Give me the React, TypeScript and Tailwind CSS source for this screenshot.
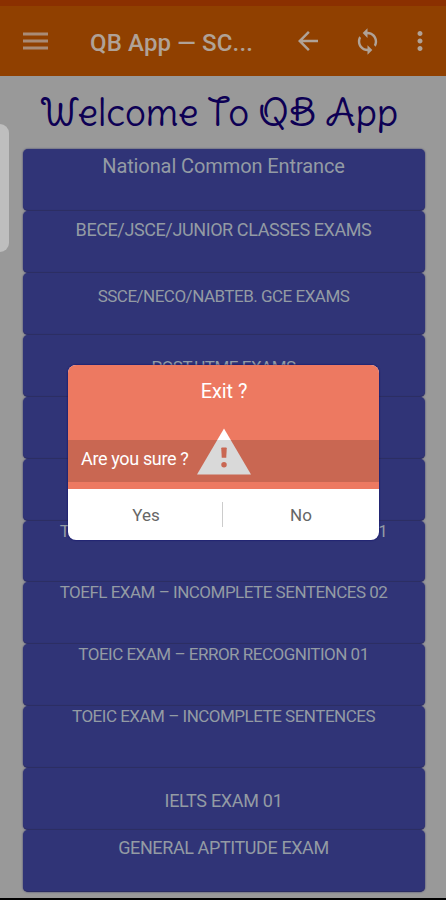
interface Exam {
  name: string;
  className: string;
}

// rows 5 and 6 have no caption
const exams: Exam[] = [
  { name: "National Common Entrance", className: "pt-[7px] text-[20px] tracking-[-0.1px]" },
  { name: "BECE/JSCE/JUNIOR CLASSES EXAMS", className: "pt-[9px] text-[18px] tracking-[-0.4px]" },
  { name: "SSCE/NECO/NABTEB. GCE EXAMS", className: "pt-[13px] text-[17px] tracking-[-0.5px]" },
  { name: "POST-UTME EXAMS", className: "pt-[22px] text-[17px] tracking-[-0.5px]" },
  { name: "", className: "pt-0" },
  { name: "", className: "pt-0" },
  { name: "TOEFL EXAM – INCOMPLETE SENTENCES 01", className: "pt-0 text-[17px] tracking-[-0.5px]" },
  { name: "TOEFL EXAM – INCOMPLETE SENTENCES 02", className: "pt-0 text-[17px] tracking-[-0.5px]" },
  { name: "TOEIC EXAM – ERROR RECOGNITION 01", className: "pt-0 text-[17px] tracking-[-0.5px]" },
  { name: "TOEIC EXAM – INCOMPLETE SENTENCES", className: "pt-0 text-[17px] tracking-[-0.5px]" },
  { name: "IELTS EXAM 01", className: "pt-[23px] text-[18px] tracking-[-0.3px]" },
  { name: "GENERAL APTITUDE EXAM", className: "pt-[8px] text-[18px] tracking-[-0.4px]" },
];

function Toolbar() {
  return (
    <header className="flex h-[70px] items-center bg-[#904000] text-[#b0a297]">
      <svg className="ml-[23px] h-[18px] w-[25px] text-[#a98b76]" viewBox="0 0 25 18" fill="currentColor">
        <path d="M0 0.500h25v3H0zM0 7.500h25v3H0zM0 14.500h25v3H0z" />
      </svg>
      <h1 className="mt-[3px] ml-[42px] w-[166px] text-[24px] font-medium tracking-[0.15px] whitespace-nowrap">QB App — SC...</h1>
      <svg className="ml-[37px] h-[30px] w-[30px]" viewBox="0 0 24 24" fill="currentColor">
        <path d="M20 11H7.83l5.59-5.59L12 4l-8 8 8 8 1.41-1.41L7.83 13H20v-2z" />
      </svg>
      <svg className="ml-[30px] h-[29px] w-[29px]" viewBox="0 0 24 24" fill="currentColor">
        <path d="M12 4V1L8 5l4 4V6c3.31 0 6 2.69 6 6 0 1.01-.25 1.97-.7 2.8l1.46 1.46C19.54 15.03 20 13.57 20 12c0-4.42-3.58-8-8-8zm0 14c-3.31 0-6-2.69-6-6 0-1.01.25-1.97.7-2.8L5.24 7.74C4.46 8.97 4 10.43 4 12c0 4.42 3.58 8 8 8v3l4-4-4-4v3z" />
      </svg>
      <svg className="ml-[23px] h-[30px] w-[30px]" viewBox="0 0 24 24" fill="currentColor">
        <path d="M12 8c1.1 0 2-.9 2-2s-.9-2-2-2-2 .9-2 2 .9 2 2 2zm0 2c-1.1 0-2 .9-2 2s.9 2 2 2 2-.9 2-2-.9-2-2-2zm0 6c-1.1 0-2 .9-2 2s.9 2 2 2 2-.9 2-2-.9-2-2-2z" />
      </svg>
    </header>
  );
}

function ExitDialog() {
  return (
    <div className="absolute top-[365px] left-[68px] h-[175px] w-[311px] overflow-hidden rounded-lg bg-white shadow-[0_0_2px_#00006a]">
      <div className="relative h-[124px] bg-[#ed7961] text-white">
        <h3 className="pt-[14px] pl-px text-center text-[20px] leading-6 tracking-[-0.1px]">Exit ?</h3>
        <svg className="absolute top-[63px] left-[129px] h-[47px] w-[54px]" viewBox="0 0 55 47">
          <path fill="#fff" d="M27.500 0L55 47H0z" />
          <path fill="#ed7961" d="M25.500 19.500h4a.8.8 0 0 1 .8.8l-.5 9.500h-4.600l-.5-9.500a.8.8 0 0 1 .8-.8z" />
          <circle cx="27.500" cy="37" r="2.800" fill="#ed7961" />
        </svg>
        <p className="absolute top-[75px] left-0 h-[42px] w-full bg-[#000]/15 pl-[13px] text-[18px] leading-[38px] tracking-[-0.35px]">Are you sure ?</p>
      </div>
      <div className="flex h-[51px] items-center text-[17px] text-[#666]">
        <button className="w-[154px] pt-[2px] pl-[2px]">Yes</button>
        <div className="h-[25px] w-px bg-[#ccc]" />
        <button className="w-[156px] pt-[2px]">No</button>
      </div>
    </div>
  );
}

export default function App() {
  return (
    <div className="relative flex h-[900px] w-[446px] flex-col overflow-hidden bg-[#999] font-['Roboto',sans-serif]">
      <div className="h-[6px] bg-[#8b3000]" />
      <Toolbar />
      <h2 className="h-[73px] pt-[16px] pr-[8px] text-center font-['Delius_Swash_Caps','Lato',sans-serif] text-[37.2px] leading-[40px] font-normal whitespace-nowrap text-[#0d0054]">
        Welcome To QB App
      </h2>
      <ul className="mr-[21px] ml-[23px] flex h-[743px] flex-col">
        {exams.map((exam, i) => (
          <li key={i} className="min-h-0 flex-1 rounded-[5px] border-b border-[#2a2c61] bg-[#303477] text-center whitespace-nowrap text-[#939ba4] shadow-[0_0_2px_#34366a]">
            <span className={`block pr-px leading-5 ${exam.className}`}>{exam.name}</span>
          </li>
        ))}
      </ul>
      <div className="absolute top-[124px] left-0 h-[128px] w-[9px] rounded-r-[9px] bg-[#bebebe]" />
      <div className="absolute bottom-0 left-0 h-[2px] w-full bg-black" />
      <ExitDialog />
    </div>
  );
}
